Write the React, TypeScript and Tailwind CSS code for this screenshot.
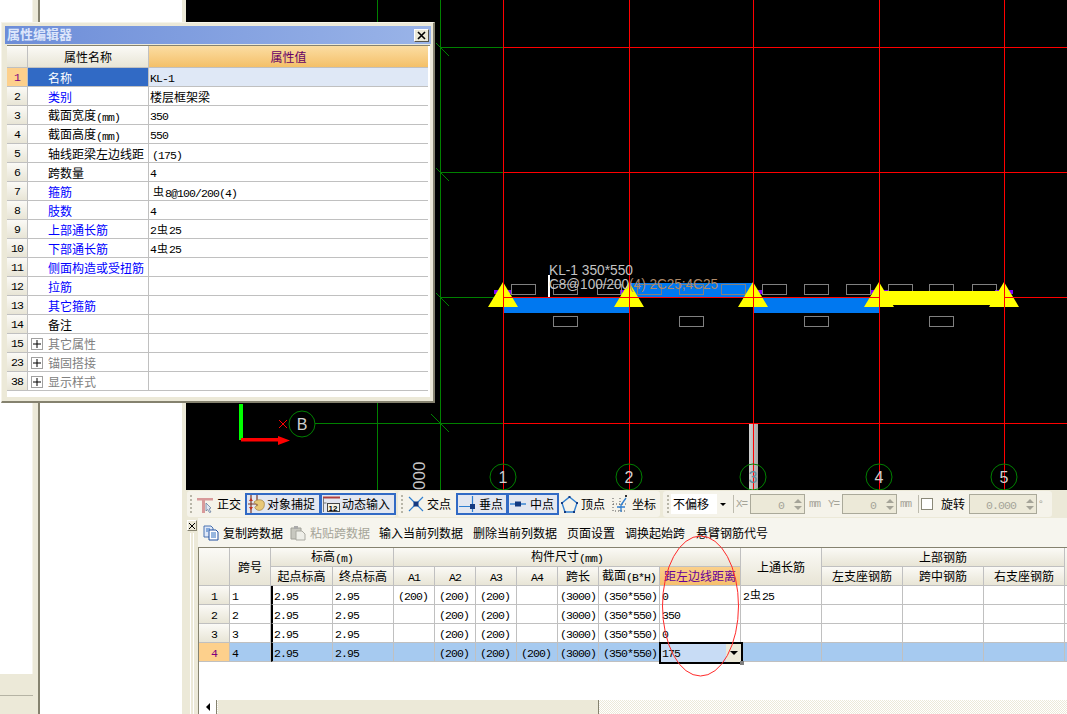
import React from 'react'

const cjk = "font-['Noto_Sans_CJK_SC',sans-serif]"

function Num({ children }: { children: React.ReactNode }) {
  return (
    <span className="relative top-[1px] font-['Liberation_Mono',monospace] text-[11.5px] tracking-[-0.9px]">
      {children}
    </span>
  )
}

const Rebar = () => <span className="mx-[1px] text-[11px]">虫</span>

interface PropRow {
  no: number
  name: React.ReactNode
  value?: React.ReactNode
  tone?: 'blue' | 'gray' | 'black'
  expand?: boolean
}

const propRows: PropRow[] = [
  { no: 1, name: '名称', value: <Num>KL-1</Num> },
  { no: 2, name: '类别', tone: 'blue', value: '楼层框架梁' },
  { no: 3, name: <>截面宽度<Num>(mm)</Num></>, value: <Num>350</Num> },
  { no: 4, name: <>截面高度<Num>(mm)</Num></>, value: <Num>550</Num> },
  { no: 5, name: '轴线距梁左边线距', value: <span className="ml-[2px]"><Num>(175)</Num></span> },
  { no: 6, name: '跨数量', value: <Num>4</Num> },
  { no: 7, name: '箍筋', tone: 'blue', value: <span className="ml-[2px]"><Rebar /><Num>8@100/200(4)</Num></span> },
  { no: 8, name: '肢数', tone: 'blue', value: <Num>4</Num> },
  { no: 9, name: '上部通长筋', tone: 'blue', value: <><Num>2</Num><Rebar /><Num>25</Num></> },
  { no: 10, name: '下部通长筋', tone: 'blue', value: <><Num>4</Num><Rebar /><Num>25</Num></> },
  { no: 11, name: '侧面构造或受扭筋', tone: 'blue' },
  { no: 12, name: '拉筋', tone: 'blue' },
  { no: 13, name: '其它箍筋', tone: 'blue' },
  { no: 14, name: '备注' },
  { no: 15, name: '其它属性', tone: 'gray', expand: true },
  { no: 23, name: '锚固搭接', tone: 'gray', expand: true },
  { no: 38, name: '显示样式', tone: 'gray', expand: true }
]

function PropertyEditor() {
  return (
    <div className="absolute left-[1px] top-[22px] h-[381px] w-[434px] border-b-2 border-r-2 border-l border-t border-b-[#85826f] border-r-[#85826f] border-l-[#f6f4ea] border-t-[#f6f4ea] bg-[#ece9d8] pl-[3px] pt-[3px]">
      <div className="flex h-[18px] w-[426px] items-center justify-between bg-gradient-to-r from-[#6d8dd8] to-[#9ab4e8] pl-[2px] pr-[2px]">
        <span className="pb-[3px] text-[13px] font-bold leading-none text-[#dde6fb]">属性编辑器</span>
        <span className="flex h-[13px] w-[15px] items-center justify-center border border-b-[#55534a] border-l-white border-r-[#55534a] border-t-white bg-[#ece9d8]">
          <svg width="9" height="9" viewBox="0 0 9 9">
            <path d="M1 1l7 7M8 1L1 8" stroke="#000" strokeWidth="1.6" />
          </svg>
        </span>
      </div>
      <div className="ml-[2px] mt-[1px] h-[352px] w-[423px] border-t border-[#85826f] bg-white">
        <div className="grid h-[22px] w-[421px] grid-cols-[21px_121px_279px]">
          <div className="border-b border-r border-[#c0c0c0] bg-gradient-to-b from-[#fbfaf6] to-[#e8e5d6]" />
          <div className="flex items-center justify-center border-b border-r border-[#c0c0c0] bg-gradient-to-b from-[#fbfaf6] to-[#e8e5d6] text-black">
            属性名称
          </div>
          <div className="flex items-center justify-center border-b border-[#c0c0c0] bg-gradient-to-b from-[#fbdda2] to-[#f4c068] text-[#660066]">
            属性值
          </div>
        </div>
        {propRows.map(row => {
          const active = row.no === 1
          const tone =
            row.tone === 'blue' ? 'text-[#0000ff]' : row.tone === 'gray' ? 'text-[#808080]' : 'text-black'
          return (
            <div className="grid h-[19px] w-[421px] grid-cols-[21px_121px_279px]" key={row.no}>
              <div
                className={
                  active
                    ? 'flex items-center justify-center border-b border-r border-[#c0c0c0] bg-[#fdd08c] text-[#800080]'
                    : 'flex items-center justify-center border-b border-r border-[#c0c0c0] bg-gradient-to-b from-[#fbfaf6] to-[#e8e5d6] text-black'
                }
              >
                <Num>{row.no}</Num>
              </div>
              <div
                className={
                  active
                    ? 'flex items-center border-b border-r border-[#c0c0c0] bg-[#316ac5] pl-[20px] pt-[1px] text-white'
                    : `flex items-center border-b border-r border-[#c0c0c0] pt-[1px] ${row.expand ? 'pl-[3px]' : 'pl-[20px]'} ${tone}`
                }
              >
                {row.expand && (
                  <span className="mr-[5px] flex h-[12px] w-[12px] items-center justify-center border border-[#a0a0a0]">
                    <svg width="8" height="8" viewBox="0 0 8 8">
                      <path d="M4 0v8M0 4h8" stroke="#000" />
                    </svg>
                  </span>
                )}
                <span className="whitespace-nowrap">{row.name}</span>
              </div>
              <div
                className={`flex items-center whitespace-pre border-b border-[#c0c0c0] pl-[1px] pt-[1px] text-black ${active ? 'bg-[#dfe8f6]' : ''}`}
              >
                {row.value}
              </div>
            </div>
          )
        })}
      </div>
    </div>
  )
}

const axes = [
  { x: 503, label: '1' },
  { x: 629, label: '2' },
  { x: 753, label: '3' },
  { x: 879, label: '4' },
  { x: 1004, label: '5' }
]
const upperTags = [511, 553, 597, 637, 679, 721, 762, 804, 846, 888, 929, 972]
const lowerTags = [553, 679, 804, 929]

function DrawingCanvas() {
  return (
    <svg className="block h-[490px] w-[881px] bg-black" viewBox="186 0 881 490">
      <defs>
        <linearGradient id="post" x1="0" x2="1" y1="0" y2="0">
          <stop offset="0" stopColor="#d0d0d0" />
          <stop offset="1" stopColor="#a8a8a8" />
        </linearGradient>
      </defs>
      <g stroke="#008000" shapeRendering="crispEdges">
        <path d="M377.5 0V490M440.5 0V490M440 47.5H503M440 172.5H503M440 297.5H503M315 423.5H503" fill="none" />
      </g>
      <g stroke="#008000">
        <path d="M436 43L449 56M436 168L449 181M436 293L449 306M431 414L449 432" fill="none" />
      </g>
      <rect x="749" y="424" width="9" height="66" fill="url(#post)" />
      <g fill="#8000ff">
        {axes.map(a => (
          <rect height="4" key={a.x} width="18" x={a.x - 9} y="290" />
        ))}
      </g>
      <rect x="503" y="297" width="126" height="16" fill="#0078f0" />
      <rect x="629" y="283" width="124" height="14" fill="#0078f0" />
      <rect x="753" y="297" width="126" height="16" fill="#0078f0" />
      <g fill="none" stroke="#808080" shapeRendering="crispEdges">
        {upperTags.map(x => (
          <rect height="10" key={x} width="24" x={x + 0.5} y="284.5" />
        ))}
        {lowerTags.map(x => (
          <rect height="10" key={x} width="24" x={x + 0.5} y="316.5" />
        ))}
      </g>
      <g fill="#ffff00">
        {axes.map(a => (
          <path d={`M${a.x} 282L${a.x + 15} 307H${a.x - 15}Z`} key={a.x} />
        ))}
      </g>
      <g stroke="#ff0000" shapeRendering="crispEdges" fill="none">
        <path d="M503.5 47.5H1067M503.5 172.5H1067M503.5 297.5H1067M503.5 423.5H1067" />
        {axes.map(a => (
          <path d={`M${a.x + 0.5} 0V490`} key={a.x} />
        ))}
      </g>
      <rect x="880" y="291" width="124" height="14" fill="#ffff00" />
      <rect x="548" y="275" width="2" height="22" fill="#fff" />
      <g fontFamily="'Liberation Sans', sans-serif" fontSize="14">
        <text fill="#c4c4c4" lengthAdjust="spacingAndGlyphs" textLength="84" x="549" y="275">
          KL-1 350*550
        </text>
        <text fill="#c4c4c4" lengthAdjust="spacingAndGlyphs" textLength="169" x="549" y="289">
          C8@100/200<tspan fill="#b08a68">(4) 2C25;4C25</tspan>
        </text>
      </g>
      <rect x="239" y="404" width="4" height="36" fill="#00ff00" />
      <path d="M241 438H278V436L290 440.5L278 445V441.5H241Z" fill="#ff0000" />
      <path d="M279 420L287 428M287 420L279 428" stroke="#ff0000" />
      <text fill="#c8c8c8" fontFamily="'Liberation Sans', sans-serif" fontSize="17" transform="translate(425 490) rotate(-90)">
        000
      </text>
      {[...axes.map(a => ({ x: a.x, y: 477, label: a.label })), { x: 302, y: 424, label: 'B' }].map(c => (
        <g key={c.label}>
          <circle cx={c.x} cy={c.y} fill="none" r="13" stroke="#008000" />
          <text
            fill={c.label === '3' ? '#5f8f9f' : '#d0d0d0'}
            fontFamily="'Liberation Sans', sans-serif"
            fontSize="16"
            textAnchor="middle"
            x={c.x}
            y={c.y + 6}
          >
            {c.label}
          </text>
        </g>
      ))}
    </svg>
  )
}

const Grip = () => (
  <span className="flex w-[3px] flex-col gap-[2px]">
    {[0, 1, 2, 3, 4].map(i => (
      <span className="h-[2px] w-[2px] bg-[#b8b6a8]" key={i} />
    ))}
  </span>
)

const OrthoIcon = () => (
  <svg width="16" height="17" viewBox="0 0 16 17">
    <path d="M0 2h16v2.5H8V17H5V4.5H0Z" fill="#d89a9a" />
    <path d="M9 7l5 5-2 1 2 3-1.5.5-2-3-1.5 1.5Z" fill="#dfe6f2" stroke="#6a7f9f" strokeWidth=".8" />
  </svg>
)
const SnapIcon = () => (
  <svg width="17" height="18" viewBox="0 0 17 18">
    <path d="M3 0v18M9 0v14M0 9h12" stroke="#7a3a2a" strokeWidth="1.2" />
    <path d="M1 6l2-3 2 3ZM1 12l2 3 2-3Z" fill="#c03020" />
    <path d="M6 7c3-3 8-3 10 0 1 3 0 7-3 8-2 1-5 0-6-2-1-2 3-2 3-3 0-1-4-1-4-3Z" fill="#e8c878" stroke="#a08040" strokeWidth=".7" />
  </svg>
)
const InputIcon = () => (
  <svg width="17" height="18" viewBox="0 0 17 18">
    <path d="M0 2.5h17" stroke="#b04040" strokeWidth="2" />
    <path d="M.5 3v14M.5 8h3" stroke="#777" fill="none" />
    <rect x="4.5" y="8.5" width="12" height="8" fill="#f4f2e4" stroke="#444" />
    <text x="5.5" y="15.5" fontSize="8" fontFamily="'Liberation Sans', sans-serif" fontWeight="700" fill="#000">12</text>
  </svg>
)
const CrossIcon = () => (
  <svg width="16" height="16" viewBox="0 0 16 16">
    <path d="M1 1l14 14M15 1L1 15" stroke="#2f7fd0" strokeWidth="1.2" />
    <rect x="5.5" y="5.5" width="5" height="5" fill="#143a80" />
  </svg>
)
const PerpIcon = () => (
  <svg width="16" height="16" viewBox="0 0 16 16">
    <path d="M0 10.5h16M13.5 0v16" stroke="#2f7fd0" strokeWidth="1.2" />
    <rect x="11" y="8" width="5" height="5" fill="#143a80" />
  </svg>
)
const MidIcon = () => (
  <svg width="16" height="16" viewBox="0 0 16 16">
    <path d="M0 8h16" stroke="#2f7fd0" strokeWidth="1.4" />
    <rect x="5" y="5.5" width="6" height="5" fill="#143a80" />
  </svg>
)
const VertexIcon = () => (
  <svg width="17" height="17" viewBox="0 0 17 17">
    <path d="M8.5 1L16 7l-3 9H4L1 7Z" fill="none" stroke="#2f7fd0" strokeWidth="1.4" />
    <path d="M7.5 0h2v2h-2zM0 6h2v2H0zM15 6h2v2h-2zM3 15h2v2H3zM12 15h2v2h-2z" fill="#143a80" />
  </svg>
)
const CoordIcon = () => (
  <svg width="16" height="18" viewBox="0 0 16 18">
    <path d="M1 3v13h14M1 9h14M8 3v13" stroke="#555" strokeDasharray="1 2" fill="none" />
    <path d="M9 10v7M9 10l5-7M5 12h8" stroke="#2f7fd0" strokeWidth="1.3" fill="none" />
    <path d="M13 0h2v2h-2z" fill="#333" />
  </svg>
)
const CopyIcon = () => (
  <svg width="16" height="16" viewBox="0 0 16 16">
    <path d="M1 1h7l2 2v9H1Z" fill="#dfe8f8" stroke="#4a72b0" />
    <path d="M6 5h7l2 2v8H6Z" fill="#fff" stroke="#1f4f9f" />
    <path d="M8 8h5M8 10h5M8 12h5M3 4h4M3 6h2" stroke="#2f6fc0" />
  </svg>
)
const PasteIcon = () => (
  <svg width="16" height="16" viewBox="0 0 16 16">
    <path d="M1 3h10v11H1Z" fill="#c8c8c0" stroke="#a0a098" />
    <path d="M4 1h4v3H4Z" fill="#aaa" />
    <path d="M6 6h6l3 3v6H6Z" fill="#eeeee8" stroke="#aaaaa2" />
  </svg>
)

function ModeButton({ icon, label, className = '' }: { icon: React.ReactNode; label: string; className?: string }) {
  return (
    <div className={`flex h-[22px] items-center border-2 border-[#316ac5] bg-[#e3e7f0] pl-[1px] ${className}`}>
      {icon}
      <span className="whitespace-nowrap">{label}</span>
    </div>
  )
}

function Spin({ value, className }: { value: string; className: string }) {
  return (
    <div className={`flex h-[20px] items-center border border-[#aaa99a] bg-[#ece9d8] ${className}`}>
      <span className="flex-1 pr-[8px] text-right text-[#a5a498]">
        <Num>{value}</Num>
      </span>
      <span className="flex w-[12px] flex-col items-center gap-[3px]">
        <span className="h-0 w-0 border-x-[4px] border-b-[4px] border-x-transparent border-b-[#a5a498]" />
        <span className="h-0 w-0 border-x-[4px] border-t-[4px] border-x-transparent border-t-[#a5a498]" />
      </span>
    </div>
  )
}

const faint = "font-['Liberation_Mono',monospace] text-[11px] tracking-[-1px] text-[#a5a498]"

function SnapToolbar() {
  return (
    <div className="flex h-[28px] items-center bg-[#ece9d8] pl-[1px] text-[12px] text-black">
      <div className="flex h-[26px] w-[209px] items-center rounded-[3px] bg-[#f5f3ea] pl-[3px]">
        <Grip />
        <span className="ml-[4px] mr-[4px]"><OrthoIcon /></span>
        <span>正交</span>
        <ModeButton className="ml-[4px] w-[76px] gap-[2px]" icon={<SnapIcon />} label="对象捕捉" />
        <ModeButton className="ml-[-1px] w-[76px] gap-[2px]" icon={<InputIcon />} label="动态输入" />
      </div>
      <div className="ml-[2px] flex h-[26px] w-[262px] items-center rounded-[3px] bg-[#f5f3ea] pl-[3px]">
        <Grip />
        <span className="ml-[4px] mr-[3px]"><CrossIcon /></span>
        <span>交点</span>
        <ModeButton className="ml-[5px] w-[52px] gap-[4px]" icon={<PerpIcon />} label="垂点" />
        <ModeButton className="ml-[-1px] w-[52px] gap-[4px]" icon={<MidIcon />} label="中点" />
        <span className="ml-[2px] mr-[3px]"><VertexIcon /></span>
        <span>顶点</span>
        <span className="ml-[7px] mr-[4px]"><CoordIcon /></span>
        <span>坐标</span>
      </div>
      <div className="ml-[3px] flex h-[26px] w-[389px] items-center rounded-[3px] bg-[#f5f3ea] pl-[4px] text-[#333]">
        <Grip />
        <div className="ml-[1px] flex h-[20px] w-[57px] items-center bg-white pl-[2px] text-black">
          <span>不偏移</span>
          <span className="ml-auto flex h-full w-[11px] items-center justify-center bg-[#f5f3ea]">
            <span className="h-0 w-0 border-x-[3px] border-t-[3px] border-x-transparent border-t-black" />
          </span>
        </div>
        <span className="ml-[5px] h-[18px] w-px bg-[#bdbbae]" />
        <span className={`ml-[2px] w-[14px] ${faint}`}>X=</span>
        <Spin className="w-[55px]" value="0" />
        <span className={`ml-[4px] w-[15px] ${faint}`}>mm</span>
        <span className={`ml-[4px] w-[14px] ${faint}`}>Y=</span>
        <Spin className="w-[55px]" value="0" />
        <span className={`ml-[3px] w-[15px] ${faint}`}>mm</span>
        <span className="ml-[3px] h-[18px] w-px bg-[#bdbbae]" />
        <span className="ml-[2px] h-[12px] w-[12px] border border-[#8a8878] bg-white" />
        <span className="ml-[8px] text-black">旋转</span>
        <Spin className="ml-[4px] w-[68px]" value="0.000" />
        <span className="ml-[2px] text-[10px] text-[#a5a498]">°</span>
      </div>
    </div>
  )
}

const headCell = 'border-b border-r border-[#c0c0c0] bg-gradient-to-b from-[#fbfaf6] to-[#e8e5d6] p-0 text-center font-normal'
const bodyCell = 'h-[19px] whitespace-nowrap border-b border-r border-[#c0c0c0] p-0 pl-[2px] text-left align-middle'
const dimCell = 'h-[19px] whitespace-nowrap border-b border-r border-[#c0c0c0] p-0 pl-[4px] text-left align-middle'

const spans = [
  { no: 1, a1: '(200)', a2: '(200)', a3: '(200)', a4: '', dist: '0', top: <><Num>2</Num><Rebar /><Num>25</Num></> },
  { no: 2, a1: '', a2: '(200)', a3: '(200)', a4: '', dist: '350' },
  { no: 3, a1: '', a2: '(200)', a3: '(200)', a4: '', dist: '0' },
  { no: 4, a1: '', a2: '(200)', a3: '(200)', a4: '(200)', dist: '175' }
]

const widths = [31, 41, 62, 61, 41, 41, 41, 41, 41, 61, 81, 81, 81, 81, 81, 8]

function SpanTable() {
  return (
    <table className="w-[874px] max-w-none shrink-0 table-fixed self-start border-separate border-spacing-0 text-[12px] text-black">
      <colgroup>
        {widths.map((w, i) => (
          <col key={i} style={{ width: w }} />
        ))}
      </colgroup>
      <thead>
        <tr className="h-[19px]">
          <th className={headCell} rowSpan={2} />
          <th className={headCell} rowSpan={2}>跨号</th>
          <th className={headCell} colSpan={2}>标高<Num>(m)</Num></th>
          <th className={headCell} colSpan={7}>构件尺寸<Num>(mm)</Num></th>
          <th className={headCell} rowSpan={2}>上通长筋</th>
          <th className={headCell} colSpan={3}>上部钢筋</th>
          <th className={headCell} rowSpan={2} />
        </tr>
        <tr className="h-[19px]">
          <th className={headCell}>起点标高</th>
          <th className={headCell}>终点标高</th>
          {['A1', 'A2', 'A3', 'A4'].map(a => (
            <th className={headCell} key={a}><Num>{a}</Num></th>
          ))}
          <th className={headCell}>跨长</th>
          <th className={headCell}>截面<Num>(B*H)</Num></th>
          <th className="border-b border-r border-[#c0c0c0] bg-gradient-to-b from-[#fbd08a] to-[#f6c06e] p-0 text-center font-normal text-[#660099]">距左边线距离</th>
          <th className={headCell}>左支座钢筋</th>
          <th className={headCell}>跨中钢筋</th>
          <th className={headCell}>右支座钢筋</th>
        </tr>
      </thead>
      <tbody>
        {spans.map(s => {
          const active = s.no === 4
          const rowBg = active ? 'bg-[#a6caf0]' : ''
          return (
            <tr key={s.no}>
              <td
                className={
                  active
                    ? 'h-[19px] border-b border-r border-[#c0c0c0] bg-[#fdd08c] p-0 text-center text-[#800080]'
                    : 'h-[19px] border-b border-r border-[#c0c0c0] bg-gradient-to-b from-[#fbfaf6] to-[#e8e5d6] p-0 text-center'
                }
              >
                <Num>{s.no}</Num>
              </td>
              <td className={`${bodyCell} ${rowBg}`}><Num>{s.no}</Num></td>
              <td className={`h-[19px] whitespace-nowrap border-b border-l-2 border-r border-[#c0c0c0] border-l-black p-0 pl-[1px] align-middle ${rowBg}`}>
                <Num>2.95</Num>
              </td>
              <td className={`${bodyCell} ${rowBg}`}><Num>2.95</Num></td>
              <td className={`${dimCell} ${rowBg}`}>{s.a1 && <Num>{s.a1}</Num>}</td>
              <td className={`${dimCell} ${rowBg}`}><Num>{s.a2}</Num></td>
              <td className={`${dimCell} ${rowBg}`}><Num>{s.a3}</Num></td>
              <td className={`${dimCell} ${rowBg}`}>{s.a4 && <Num>{s.a4}</Num>}</td>
              <td className={`${bodyCell} ${rowBg}`}><Num>(3000)</Num></td>
              <td className={`${dimCell} ${rowBg}`}><Num>(350*550)</Num></td>
              <td className={`relative ${bodyCell} ${rowBg}`}>
                {active ? (
                  <div className="absolute -left-[1px] -top-[1px] flex h-[22px] w-[84px] items-center border-2 border-black bg-[#c8dcf5] pl-[1px]">
                    <Num>{s.dist}</Num>
                    <span className="ml-auto flex w-[15px] items-center justify-center self-stretch bg-[#ece9d8]">
                      <span className="h-0 w-0 border-x-[4px] border-t-[4px] border-x-transparent border-t-black" />
                    </span>
                    <span className="absolute -bottom-[3px] -right-[3px] h-[4px] w-[4px] bg-[#808080]" />
                  </div>
                ) : (
                  <Num>{s.dist}</Num>
                )}
              </td>
              <td className={`${bodyCell} ${rowBg}`}>{s.top}</td>
              <td className={`${bodyCell} ${rowBg}`} />
              <td className={`${bodyCell} ${rowBg}`} />
              <td className={`${bodyCell} ${rowBg}`} />
              <td className={`${bodyCell} ${rowBg}`} />
            </tr>
          )
        })}
      </tbody>
    </table>
  )
}

function SpanPanel() {
  return (
    <div className="flex h-[196px] bg-[#ece9d8] text-[12px] text-black">
      <div className="flex w-[12px] flex-col items-start pl-[1px] pt-[2px]">
        <span className="flex h-[11px] w-[10px] items-center justify-center border border-b-[#85826f] border-l-white border-r-[#85826f] border-t-white">
          <svg width="6" height="6" viewBox="0 0 6 6">
            <path d="M0 0l6 6M6 0L0 6" stroke="#000" />
          </svg>
        </span>
        <span className="ml-[3px] mt-[2px] h-[181px] w-[4px] border-x border-[#fff]" />
      </div>
      <div className="flex min-w-0 flex-1 flex-col">
        <div className="flex h-[29px] items-center bg-[#f6f5ee] pl-[5px]">
          <CopyIcon />
          <span className="ml-[4px]">复制跨数据</span>
          <span className="ml-[7px]"><PasteIcon /></span>
          <span className="ml-[4px] text-[#a5a498]">粘贴跨数据</span>
          <span className="ml-[9px]">输入当前列数据</span>
          <span className="ml-[10px]">删除当前列数据</span>
          <span className="ml-[10px]">页面设置</span>
          <span className="ml-[10px]">调换起始跨</span>
          <span className="ml-[11px]">悬臂钢筋代号</span>
        </div>
        <div className="flex h-[153px] flex-col overflow-hidden border-l border-t border-[#85826f] bg-white">
          <SpanTable />
        </div>
        <div className="flex h-[14px] items-stretch border-l border-[#85826f] bg-[repeating-conic-gradient(#ece9d8_0_25%,#ffffff_0_50%)] bg-[length:2px_2px]">
          <span className="flex w-[18px] items-center justify-center border-r border-[#85826f] bg-white">
            <span className="h-0 w-0 border-y-[4px] border-r-[4px] border-y-transparent border-r-black" />
          </span>
          <span className="ml-[1px] w-[381px] border-r border-[#85826f] bg-[#ece9d8]" />
        </div>
      </div>
    </div>
  )
}

export default function App() {
  return (
    <div className={`relative flex h-[714px] w-[1067px] overflow-hidden bg-white text-[12px] leading-none ${cjk}`}>
      <div className="flex h-full w-[186px] shrink-0 bg-[#ece9d8]">
        <div className="flex w-[33px] flex-col">
          <div className="h-[674px] border-r border-[#f6f4ea] bg-white" />
          <div className="h-[22px] border-b border-[#b5b3a4]" />
          <div className="flex-1" />
        </div>
        <div className="ml-[5px] w-[2px] bg-[#85826f]" />
        <div className="w-[142px] bg-white" />
      </div>
      <div className="flex min-w-0 flex-1 flex-col">
        <DrawingCanvas />
        <SnapToolbar />
        <SpanPanel />
      </div>
      <PropertyEditor />
      <svg className="pointer-events-none absolute left-[655px] top-[530px]" width="90" height="152" viewBox="0 0 90 152">
        <ellipse cx="45.5" cy="76" fill="none" rx="38" ry="70" stroke="#ff2a2a" />
      </svg>
    </div>
  )
}
